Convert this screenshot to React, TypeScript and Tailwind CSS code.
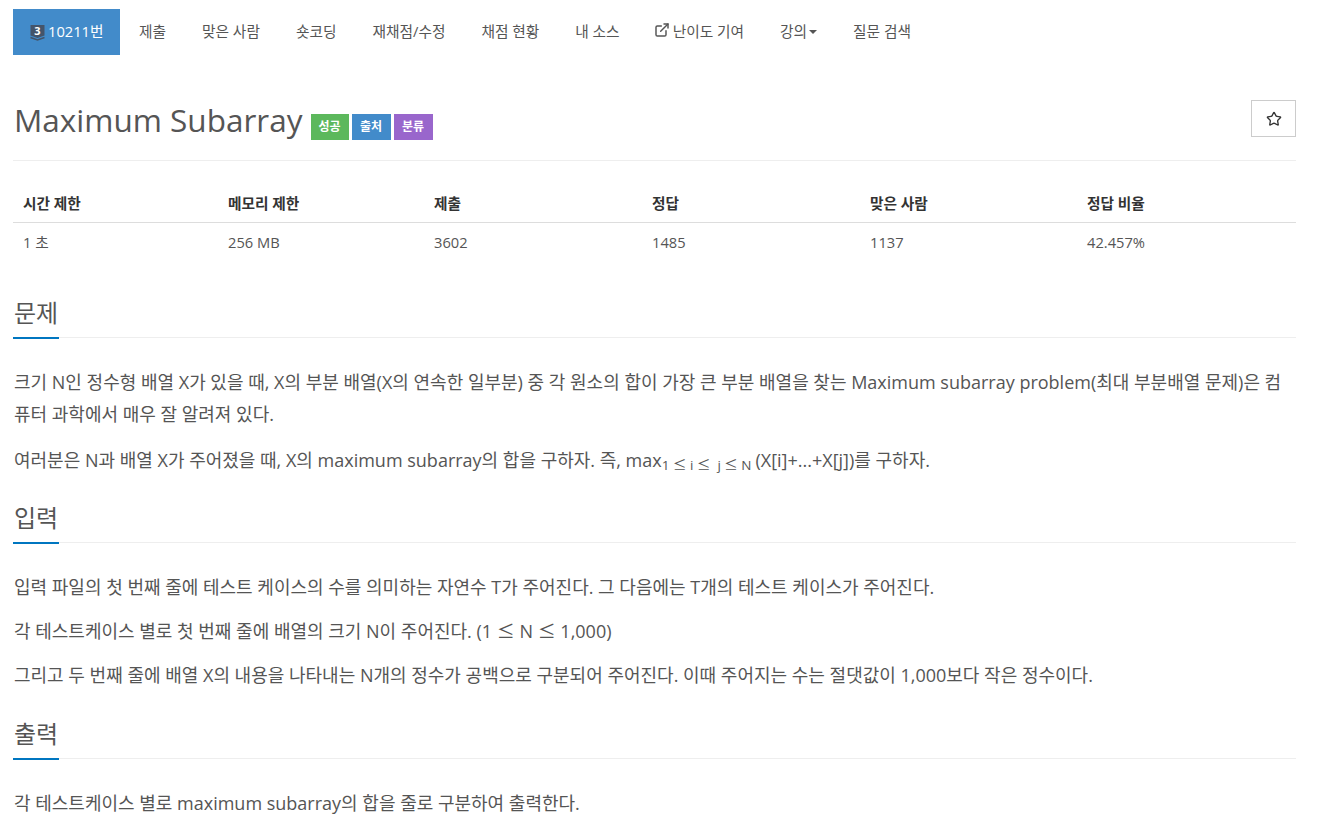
import { ExternalLink, Star } from 'lucide-react';

const font = "font-['Open_Sans','Noto_Sans_CJK_KR',sans-serif]";

const navItems = ['제출', '맞은 사람', '숏코딩', '재채점/수정', '채점 현황', '내 소스'];

function Le() {
  return <span className="font-['Noto_Sans_CJK_KR',sans-serif] leading-none">≤</span>;
}

function Section({ title, children }: { title: string; children: React.ReactNode }) {
  return (
    <section>
      <div className="relative h-[46px] border-b border-[#eeeeee]">
        <h2 className="text-[24px] leading-[34px] pt-[4px] pl-[1px] text-[#555555]">{title}</h2>
        <div className="absolute left-0 bottom-[-2px] w-[46px] h-[2px] bg-[#0076c0]"></div>
      </div>
      <div className="pt-[28px] pl-[1px] text-[18px] leading-[32px] text-[#555555]">{children}</div>
    </section>
  );
}

export default function App() {
  return (
    <div className={`${font} w-[1332px] h-[826px] overflow-hidden bg-white pl-[13px] pr-[36px] pt-[9px] text-[#555555]`}>
      {/* Tabs */}
      <nav className="flex items-center h-[46px] text-[14.7px]">
        <div className="flex items-center h-full w-[107px] pl-[17px] pb-[2px] bg-[#428bca] text-white">
          <svg width="15" height="17" viewBox="0 0 15 17" className="mr-[3px] mt-[2px]">
            <path d="M0.500 1h14v10.500l-7 2.500-7-2.500z" fill="#44546a" />
            <path d="M0.500 13.500l7 2.500 7-2.500" fill="none" stroke="#44546a" strokeWidth="1.400" />
            <text x="7.500" y="11" textAnchor="middle" fontSize="11" fontWeight="700" fill="#fff">3</text>
          </svg>
          10211번
        </div>
        <div className="flex gap-[36px] pl-[19px] pb-[2px]">
          {navItems.map((item) => (
            <span key={item}>{item}</span>
          ))}
          <span className="flex items-center">
            <ExternalLink size={16} strokeWidth={2.2} className="mr-[3px] -ml-[2px] -mt-[2px]" />
            난이도 기여
          </span>
          <span className="flex items-center">
            강의
            <span className="ml-[2px] mt-[2px] border-x-[4px] border-t-[4px] border-x-transparent border-t-[#555555]"></span>
          </span>
          <span>질문 검색</span>
        </div>
      </nav>

      {/* Title */}
      <header className="flex items-start h-[106px] border-b border-[#eeeeee] pt-[43px]">
        <h1 className="ml-[1px] text-[31.5px] leading-[44px] text-[#555555]">Maximum Subarray</h1>
        <div className="flex gap-[3px] ml-[8px] mt-[16px] text-[12px] font-bold text-white">
          <span className="flex items-center justify-center w-[38px] h-[26px] bg-[#5cb85c]">성공</span>
          <span className="flex items-center justify-center w-[39px] h-[26px] bg-[#428bca]">출처</span>
          <span className="flex items-center justify-center w-[39px] h-[26px] bg-[#9966cc]">분류</span>
        </div>
        <button className="ml-auto mt-[2px] flex items-center justify-center w-[45px] h-[37px] border border-[#cccccc] text-[#333333]">
          <Star size={16} strokeWidth={2} />
        </button>
      </header>

      {/* Limits */}
      <table className="w-full mt-[23px] text-[14.7px] table-fixed">
        <thead>
          <tr className="h-[38px] border-b border-[#dddddd] text-[#333333]">
            <th className="w-[205px] px-[10px] text-left font-bold">시간 제한</th>
            <th className="w-[206px] px-[10px] text-left font-bold">메모리 제한</th>
            <th className="w-[218px] px-[10px] text-left font-bold">제출</th>
            <th className="w-[218px] px-[10px] text-left font-bold">정답</th>
            <th className="w-[217px] px-[10px] text-left font-bold">맞은 사람</th>
            <th className="px-[10px] text-left font-bold">정답 비율</th>
          </tr>
        </thead>
        <tbody>
          <tr className="h-[39px]">
            <td className="px-[10px]">1 초</td>
            <td className="px-[10px]">256 MB</td>
            <td className="px-[10px]">3602</td>
            <td className="px-[10px]">1485</td>
            <td className="px-[10px]">1137</td>
            <td className="px-[10px]">42.457%</td>
          </tr>
        </tbody>
      </table>

      <div className="flex flex-col gap-[21px] mt-[31px]">
        <Section title="문제">
          <p>크기 N인 정수형 배열 X가 있을 때, X의 부분 배열(X의 연속한 일부분) 중 각 원소의 합이 가장 큰 부분 배열을 찾는 Maximum subarray problem(최대 부분배열 문제)은 컴퓨터 과학에서 매우 잘 알려져 있다.</p>
          <p className="mt-[14px]">
            여러분은 N과 배열 X가 주어졌을 때, X의 maximum subarray의 합을 구하자. 즉, max
            <sub className="text-[13.5px] mr-[4px]">1 <Le /> i <Le /> &nbsp;j <Le /> N</sub>(X[i]+...+X[j])를 구하자.
          </p>
        </Section>
        <Section title="입력">
          <p>입력 파일의 첫 번째 줄에 테스트 케이스의 수를 의미하는 자연수 T가 주어진다. 그 다음에는 T개의 테스트 케이스가 주어진다.</p>
          <p className="mt-[12px]">각 테스트케이스 별로 첫 번째 줄에 배열의 크기 N이 주어진다. (1 <Le /> N <Le /> 1,000)</p>
          <p className="mt-[12px] mb-[1px]">그리고 두 번째 줄에 배열 X의 내용을 나타내는 N개의 정수가 공백으로 구분되어 주어진다. 이때 주어지는 수는 절댓값이 1,000보다 작은 정수이다.</p>
        </Section>
        <Section title="출력">
          <p>각 테스트케이스 별로 maximum subarray의 합을 줄로 구분하여 출력한다.</p>
        </Section>
      </div>
    </div>
  );
}
